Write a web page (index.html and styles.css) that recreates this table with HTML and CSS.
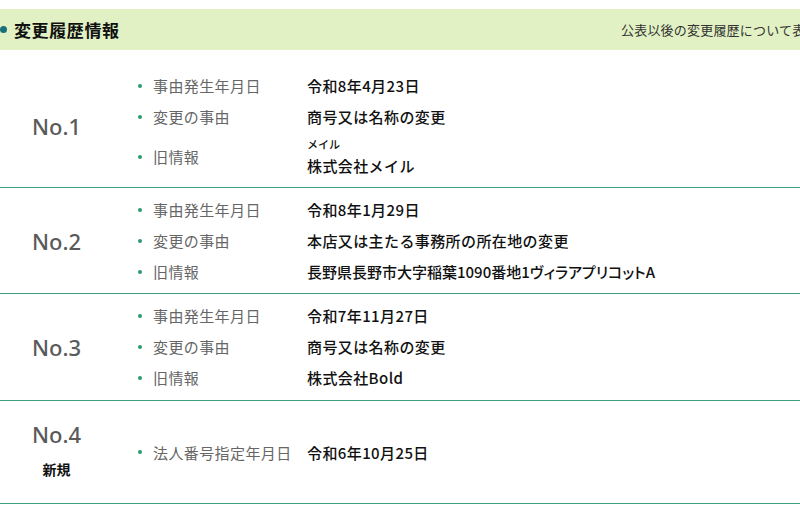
FILE: index.html
```html
<!DOCTYPE html>
<html lang="ja">
<head>
<meta charset="utf-8">
<title>変更履歴情報</title>
<link rel="stylesheet" href="styles.css">
</head>
<body>
<section class="history">
  <header class="history-head">
    <h2 class="history-title"><span class="head-dot"></span>変更履歴情報</h2>
    <p class="history-note">公表以後の変更履歴について表示しています。</p>
  </header>

  <div class="rows">
    <div class="row row-first">
      <div class="row-no"><span class="no">No.1</span></div>
      <ul class="items">
        <li class="item"><span class="label">事由発生年月日</span><span class="value">令和8年4月23日</span></li>
        <li class="item"><span class="label">変更の事由</span><span class="value">商号又は名称の変更</span></li>
        <li class="item item-kana"><span class="label">旧情報</span><span class="value"><span class="kana">メイル</span><span class="main">株式会社メイル</span></span></li>
      </ul>
    </div>

    <div class="row">
      <div class="row-no"><span class="no">No.2</span></div>
      <ul class="items">
        <li class="item"><span class="label">事由発生年月日</span><span class="value">令和8年1月29日</span></li>
        <li class="item"><span class="label">変更の事由</span><span class="value">本店又は主たる事務所の所在地の変更</span></li>
        <li class="item"><span class="label">旧情報</span><span class="value value-address">長野県長野市大字稲葉1090番地1ヴィラアプリコットA</span></li>
      </ul>
    </div>

    <div class="row row-tall">
      <div class="row-no"><span class="no">No.3</span></div>
      <ul class="items">
        <li class="item"><span class="label">事由発生年月日</span><span class="value">令和7年11月27日</span></li>
        <li class="item"><span class="label">変更の事由</span><span class="value">商号又は名称の変更</span></li>
        <li class="item"><span class="label">旧情報</span><span class="value">株式会社Bold</span></li>
      </ul>
    </div>

    <div class="row">
      <div class="row-no row-no-new"><span class="no">No.4</span><span class="new">新規</span></div>
      <ul class="items">
        <li class="item"><span class="label">法人番号指定年月日</span><span class="value">令和6年10月25日</span></li>
      </ul>
    </div>
  </div>
</section>
</body>
</html>
```

FILE: styles.css
```css
* {
  box-sizing: border-box;
}

html, body {
  margin: 0;
  padding: 0;
  background: #ffffff;
  overflow: hidden;
}

body {
  font-family: "Noto Sans CJK JP", "Noto Sans", sans-serif;
  color: #111111;
  width: 800px;
}

.history {
  padding-top: 9px;
}

.history-head {
  display: grid;
  grid-template-columns: 621px max-content;
  align-items: center;
  height: 41px;
  background: #e1f1c3;
  overflow: hidden;
}

.history-title {
  display: flex;
  align-items: center;
  margin: 0;
  font-size: 17px;
  font-weight: 700;
  letter-spacing: 0.6px;
  color: #111111;
}

.head-dot {
  width: 7px;
  height: 7px;
  border-radius: 50%;
  background: #17707a;
  margin-right: 7px;
}

.history-note {
  margin: 0;
  font-size: 13px;
  color: #333333;
  white-space: nowrap;
  letter-spacing: 0.2px;
}

.rows {
  display: flex;
  flex-direction: column;
}

.row {
  display: grid;
  grid-template-columns: 113px 1fr;
  align-items: center;
  border-bottom: 1px solid #3e9f80;
  padding: 6px 0;
}

.row-first {
  padding-top: 20px;
  padding-bottom: 6px;
}

.row-tall {
  padding-bottom: 7px;
}

.row-no {
  display: flex;
  flex-direction: column;
  align-items: center;
  padding: 11px 0;
}

.no {
  font-family: "Noto Sans", sans-serif;
  font-size: 22px;
  font-weight: 500;
  line-height: 32px;
  color: #5a5a5a;
}

.new {
  font-size: 14px;
  font-weight: 700;
  line-height: 34px;
  margin-top: 2px;
  color: #111111;
}

.items {
  list-style: none;
  margin: 0;
  padding: 0 0 0 25px;
}

.item {
  display: grid;
  grid-template-columns: 169px 1fr;
  align-items: center;
  min-height: 31px;
  font-size: 15px;
  letter-spacing: 0.4px;
}

.label {
  display: flex;
  align-items: center;
  color: #666666;
}

.label::before {
  content: "";
  width: 4px;
  height: 4px;
  border-radius: 50%;
  background: #2e9b6c;
  margin-right: 11px;
  flex: none;
}

.value {
  font-weight: 500;
  color: #111111;
  line-height: 31px;
  white-space: nowrap;
}

.value-address {
  letter-spacing: 0;
  font-feature-settings: "palt";
}

.item-kana .value {
  display: flex;
  flex-direction: column;
}

.kana {
  font-size: 11px;
  line-height: 12px;
  padding-top: 6px;
  letter-spacing: 0;
}

.main {
  line-height: 31px;
}
```
